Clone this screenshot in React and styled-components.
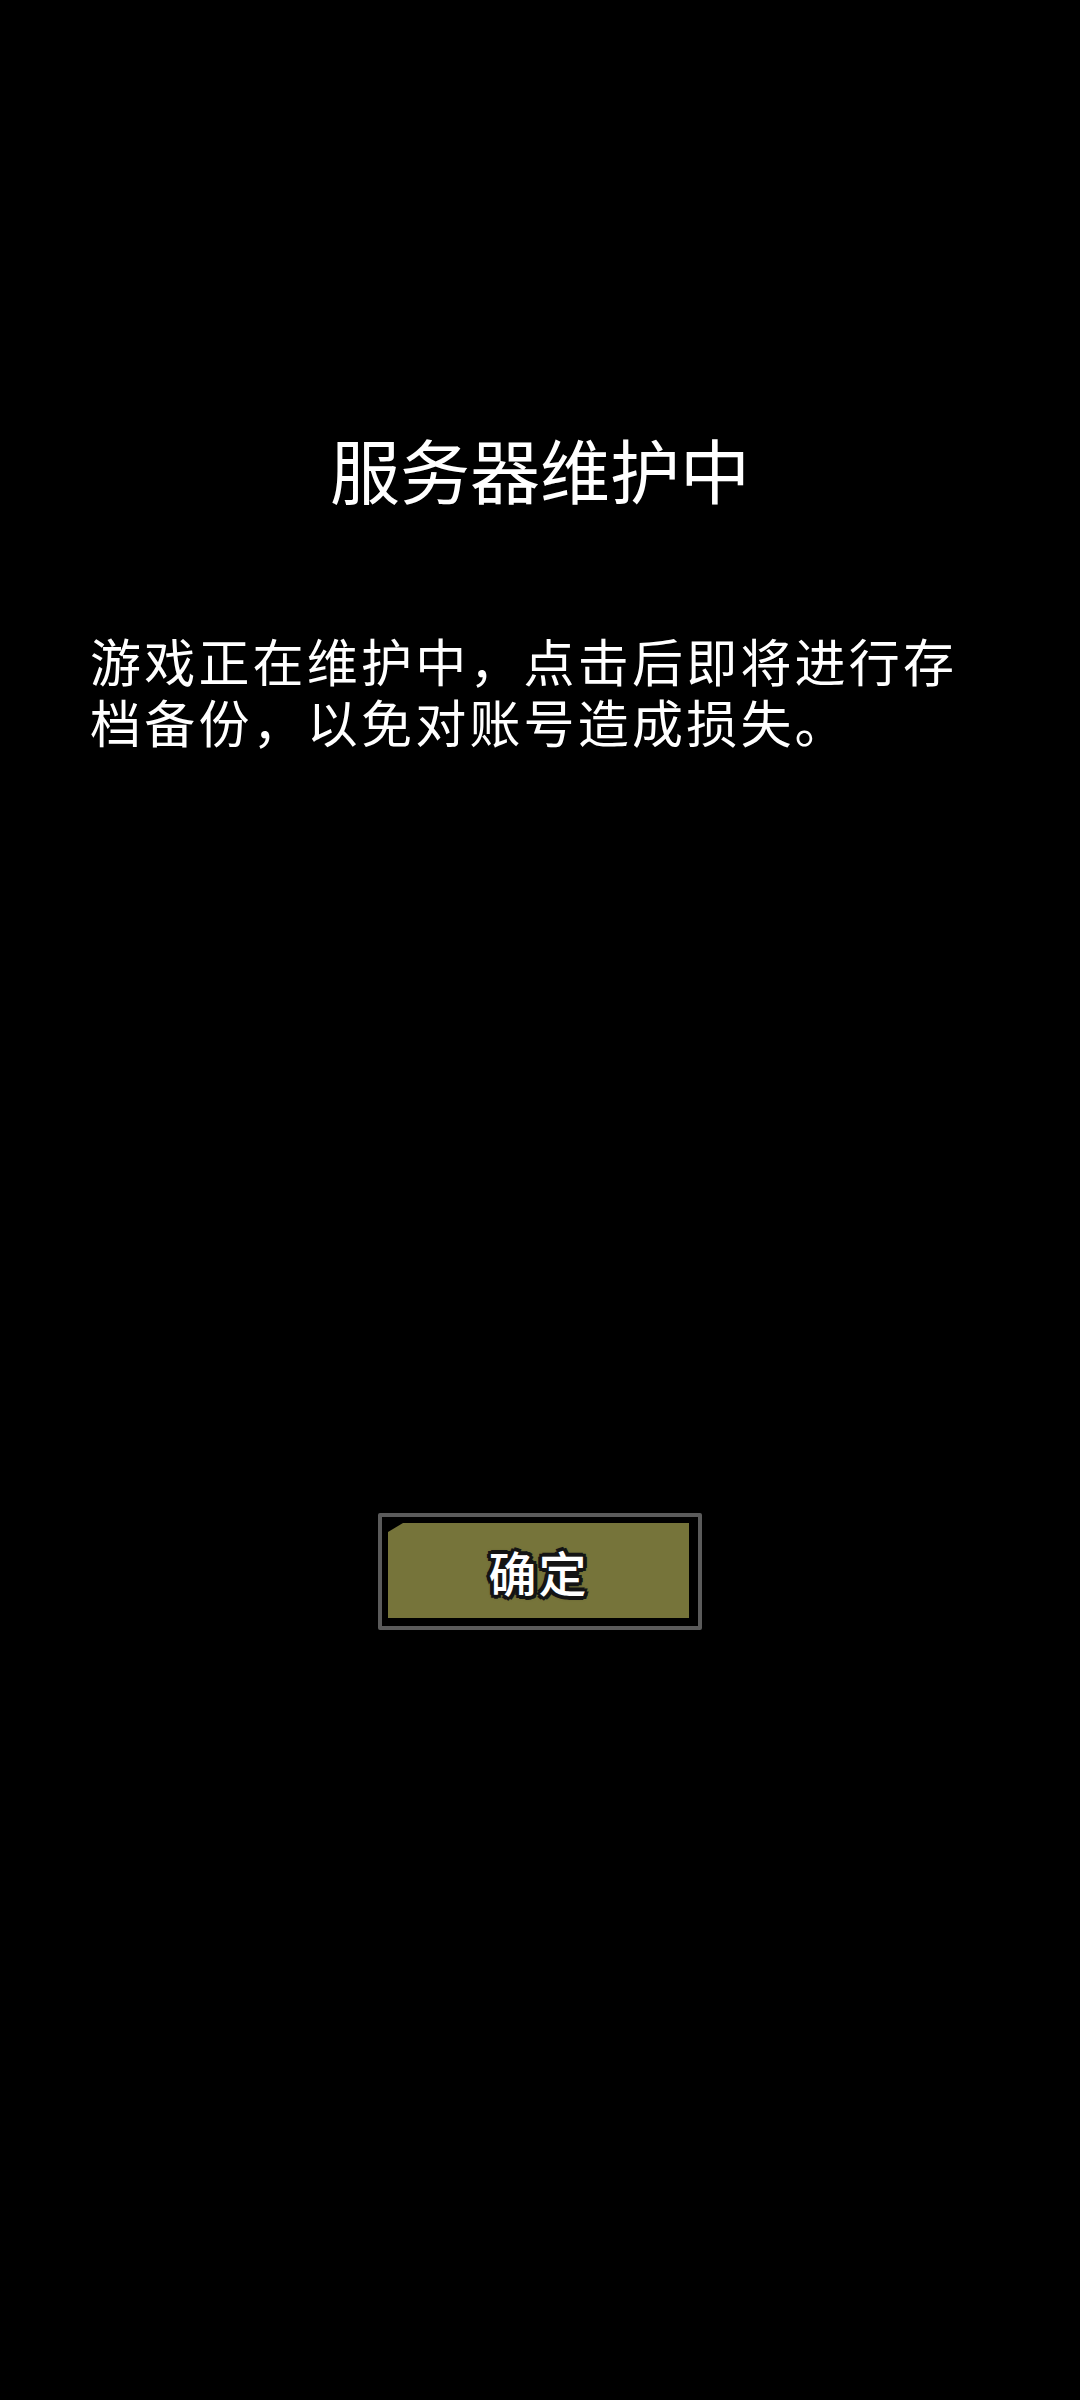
import React from 'react';
import styled, { createGlobalStyle } from 'styled-components';

const GlobalStyle = createGlobalStyle`
  html, body {
    margin: 0;
    padding: 0;
    background: #000;
  }
  body {
    font-family: "Noto Sans CJK SC", "Noto Sans", sans-serif;
  }
`;

// Pantalla completa negra
const Screen = styled.main`
  display: flex;
  flex-direction: column;
  width: 1080px;
  min-height: 2400px;
  background: #000;
  color: #fff;
  padding-top: 434px;
  box-sizing: border-box;
`;

const Title = styled.h1`
  margin: 0;
  font-size: 70px;
  line-height: 1;
  font-weight: 400;
  text-align: center;
  color: #fff;
`;

const Message = styled.p`
  margin: 126px 0 0;
  padding: 0 80px 0 90px;
  font-size: 51px;
  line-height: 61px;
  letter-spacing: 3.2px;
  font-weight: 400;
  color: #fff;
`;

const ButtonRow = styled.div`
  display: flex;
  justify-content: center;
  margin-top: 761px;
`;

// Marco gris exterior del botón
const Frame = styled.button`
  display: flex;
  width: 324px;
  height: 117px;
  padding: 6px 9px 8px 6px;
  box-sizing: border-box;
  background: #000;
  border: 4px solid #5b5b5b;
  border-radius: 2px;
  cursor: pointer;
`;

const Face = styled.span`
  flex: 1;
  display: flex;
  align-items: center;
  justify-content: center;
  background: #76743a;
  clip-path: polygon(15px 0, 100% 0, 100% 100%, 0 100%, 0 9px);
`;

const Label = styled.span`
  font-family: "Noto Sans CJK SC", "Noto Sans", sans-serif;
  font-size: 48px;
  font-weight: 500;
  line-height: 1;
  letter-spacing: 2px;
  color: #fff;
  text-shadow:
    4px 0 0 #141414, -4px 0 0 #141414, 0 4px 0 #141414, 0 -4px 0 #141414,
    3px 3px 0 #141414, -3px 3px 0 #141414, 3px -3px 0 #141414, -3px -3px 0 #141414,
    2px 0 0 #141414, -2px 0 0 #141414, 0 2px 0 #141414, 0 -2px 0 #141414,
    0 0 5px #141414;
`;

export default function App() {
  return (
    <>
      <GlobalStyle />
      <Screen>
        <Title>服务器维护中</Title>
        <Message>游戏正在维护中，点击后即将进行存档备份，以免对账号造成损失。</Message>
        <ButtonRow>
          <Frame>
            <Face>
              <Label>确定</Label>
            </Face>
          </Frame>
        </ButtonRow>
      </Screen>
    </>
  );
}
